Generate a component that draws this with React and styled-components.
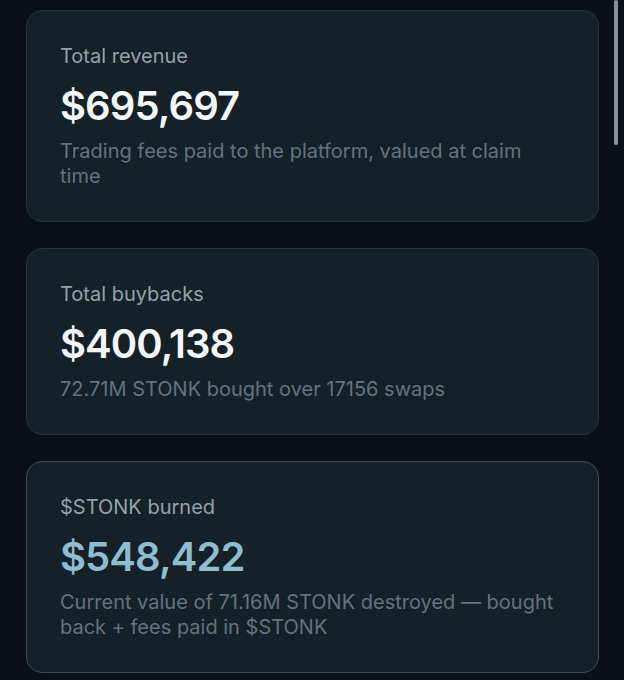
import React from "react";
import styled, { createGlobalStyle } from "styled-components";

const GlobalStyle = createGlobalStyle`
  html, body {
    margin: 0;
    background: #0a1014;
    font-family: Inter, "Noto Sans", "Liberation Sans", sans-serif;
    overflow: hidden;
  }
`;

const Page = styled.div`
  display: flex;
  flex-direction: column;
  gap: 26px;
  padding: 10px 25px 20px 26px;
  min-height: 680px;
  box-sizing: border-box;
`;

const Card = styled.div`
  background: #152027;
  border: 1px solid ${(p) => (p.$accent ? "#3a4e58" : "#27333b")};
  border-radius: 16px;
  padding: 32px 40px 32px 33px;
  display: flex;
  flex-direction: column;
`;

const Label = styled.div`
  font-size: 20px;
  line-height: 26px;
  color: #97a1a8;
`;

const Value = styled.div`
  margin-top: 13px;
  font-size: 40px;
  line-height: 48px;
  font-weight: 600;
  letter-spacing: -0.9px;
  color: ${(p) => (p.$accent ? "#8ebcd0" : "#f4f7f8")};
`;

const Desc = styled.div`
  margin-top: 9px;
  font-size: 20px;
  line-height: 25px;
  color: #66727c;
`;

const Scrollbar = styled.div`
  position: fixed;
  top: 0;
  right: 6px;
  width: 4px;
  height: 145px;
  border-radius: 2px;
  background: #8a9096;
`;

const stats = [
  {
    label: "Total revenue",
    value: "$695,697",
    desc: "Trading fees paid to the platform, valued at claim time",
  },
  {
    label: "Total buybacks",
    value: "$400,138",
    desc: "72.71M STONK bought over 17156 swaps",
  },
  {
    label: "$STONK burned",
    value: "$548,422",
    desc: "Current value of 71.16M STONK destroyed — bought back + fees paid in $STONK",
    accent: true,
  },
];

export default function App() {
  return (
    <>
      <GlobalStyle />
      <Page>
        {stats.map((s) => (
          <Card key={s.label} $accent={s.accent}>
            <Label>{s.label}</Label>
            <Value $accent={s.accent}>{s.value}</Value>
            <Desc>{s.desc}</Desc>
          </Card>
        ))}
      </Page>
      <Scrollbar />
    </>
  );
}
